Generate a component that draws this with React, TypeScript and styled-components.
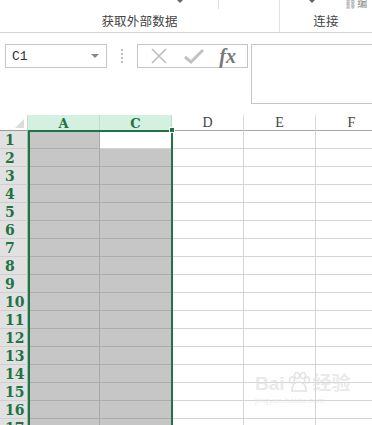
import React from "react";
import styled, { createGlobalStyle } from "styled-components";

const Global = createGlobalStyle`
  html, body { margin: 0; padding: 0; background: #ffffff; }
  body { width: 372px; height: 425px; overflow: hidden; font-family: "Noto Sans CJK SC", "Liberation Sans", sans-serif; }
`;

const Page = styled.div`
  position: relative;
  width: 372px;
  height: 425px;
  overflow: hidden;
  background: #fff;
`;

const Ribbon = styled.div`
  height: 33px;
  border-bottom: 1px solid #d4d4d4;
  display: flex;
  position: relative;
  box-sizing: border-box;
`;

const Group = styled.div<{ $w: number; $sep?: boolean }>`
  width: ${(p) => p.$w}px;
  flex: none;
  display: flex;
  align-items: flex-end;
  justify-content: center;
  padding-bottom: 2px;
  box-sizing: border-box;
  border-right: ${(p) => (p.$sep ? "1px solid #e2e2e2" : "none")};
  position: relative;
  font-size: 12.5px;
  color: #444;
  letter-spacing: 0.2px;
`;

const TinyArrow = styled.span<{ $x: number }>`
  position: absolute;
  left: ${(p) => p.$x}px;
  top: 0;
  width: 0;
  height: 0;
  border-left: 3px solid transparent;
  border-right: 3px solid transparent;
  border-top: 3px solid #666;
`;

const TinyLine = styled.span<{ $x: number }>`
  position: absolute;
  left: ${(p) => p.$x}px;
  top: 0;
  width: 1px;
  height: 9px;
  background: #e0e0e0;
`;

const EditSnip = styled.span`
  position: absolute;
  left: 64px;
  top: -5px;
  font-size: 10px;
  color: #888;
`;

const FormulaArea = styled.div`
  height: 82px;
  display: flex;
  align-items: flex-start;
  padding: 11px 0 0 5px;
  box-sizing: border-box;
`;

const NameBox = styled.div`
  width: 102px;
  height: 24px;
  border: 1px solid #c6c6c6;
  box-sizing: border-box;
  display: flex;
  align-items: center;
  justify-content: space-between;
  padding: 0 7px 0 6px;
  font-family: "Liberation Mono", "DejaVu Sans Mono", monospace;
  font-size: 13px;
  color: #333;
`;

const DownTri = styled.span`
  width: 0;
  height: 0;
  border-left: 4px solid transparent;
  border-right: 4px solid transparent;
  border-top: 4px solid #888;
`;

const Dots = styled.div`
  width: 2px;
  height: 14px;
  margin: 5px 14px 0 14px;
  background: repeating-linear-gradient(to bottom, #bbb 0 2px, transparent 2px 4px);
`;

const FxBox = styled.div`
  width: 111px;
  height: 24px;
  border: 1px solid #c6c6c6;
  box-sizing: border-box;
  display: flex;
  align-items: center;
  justify-content: space-around;
  padding: 0 4px;
`;

const FxText = styled.span`
  font-family: "Liberation Serif", "DejaVu Serif", serif;
  font-style: italic;
  font-weight: bold;
  font-size: 20px;
  color: #777;
  line-height: 1;
`;

const FormulaInput = styled.div`
  margin-left: 3px;
  flex: 1;
  height: 60px;
  border: 1px solid #c6c6c6;
  border-right: none;
  box-sizing: border-box;
`;

const Sheet = styled.div`
  position: relative;
  display: grid;
  grid-template-columns: 28px 72px 72px 72px 72px 72px;
  grid-auto-rows: 18px;
  grid-template-rows: 16px;
`;

const Corner = styled.div`
  position: relative;
  background: #fff;
  border-right: 1px solid #d4d4d4;
  border-bottom: 1px solid #9a9a9a;
  box-sizing: border-box;
  &::after {
    content: "";
    position: absolute;
    right: 3px;
    bottom: 2px;
    width: 0;
    height: 0;
    border-left: 9px solid transparent;
    border-bottom: 9px solid #dcdcdc;
  }
`;

const ColHead = styled.div<{ $sel?: boolean }>`
  background: ${(p) => (p.$sel ? "#d3f0e0" : "#fff")};
  border-right: 1px solid ${(p) => (p.$sel ? "#c0dccb" : "#dadada")};
  border-bottom: 1px solid ${(p) => (p.$sel ? "#217346" : "#a8a8a8")};
  box-sizing: border-box;
  display: flex;
  align-items: center;
  justify-content: center;
  font-family: ${(p) => (p.$sel ? `"DejaVu Serif", serif` : `"Liberation Serif", serif`)};
  font-size: ${(p) => (p.$sel ? "13px" : "14px")};
  font-weight: ${(p) => (p.$sel ? "bold" : "normal")};
  color: ${(p) => (p.$sel ? "#217346" : "#444")};
  padding-top: 1px;
`;

const RowHead = styled.div`
  background: #e1e1e1;
  border-right: 1px solid #9fbfab;
  border-bottom: 1px solid #cfcfcf;
  box-sizing: border-box;
  display: flex;
  align-items: center;
  justify-content: flex-start;
  padding-left: 5px;
  font-family: "DejaVu Serif", "Liberation Serif", serif;
  font-size: 14px;
  font-weight: bold;
  color: #217346;
  letter-spacing: 0;
`;

const Cell = styled.div<{ $fill?: boolean }>`
  background: ${(p) => (p.$fill ? "#c6c6c6" : "#fff")};
  border-right: 1px solid ${(p) => (p.$fill ? "#a9a9a9" : "#d4d4d4")};
  border-bottom: 1px solid ${(p) => (p.$fill ? "#adadad" : "#d4d4d4")};
  box-sizing: border-box;
`;

const Selection = styled.div`
  position: absolute;
  left: 28px;
  top: 15px;
  width: 145px;
  height: 320px;
  border: 2px solid #217346;
  box-sizing: border-box;
  pointer-events: none;
`;

const Handle = styled.div`
  position: absolute;
  left: 169px;
  top: 12px;
  width: 6px;
  height: 6px;
  background: #217346;
  border: 1px solid #fff;
  box-sizing: border-box;
`;

const Watermark = styled.div`
  position: absolute;
  left: 255px;
  top: 372px;
  color: rgba(225, 225, 225, 0.7);
  font-family: "Liberation Sans", "Noto Sans CJK SC", sans-serif;
  pointer-events: none;
  line-height: 1;
`;

const WmTop = styled.div`
  display: flex;
  align-items: center;
  gap: 2px;
  font-size: 19px;
  font-weight: bold;
`;

const WmBottom = styled.div`
  font-size: 8px;
  margin-top: 3px;
  letter-spacing: 0.3px;
`;

const cols = ["A", "C", "D", "E", "F"];

export default function App() {
  const rows = Array.from({ length: 17 }, (_, i) => i + 1);
  return (
    <Page>
      <Global />
      <Ribbon>
        <Group $w={280} $sep>
          获取外部数据
          <TinyArrow $x={177} />
          <TinyLine $x={218} />
        </Group>
        <Group $w={92}>
          连接
          <TinyArrow $x={29} />
          <EditSnip>⛓编</EditSnip>
        </Group>
      </Ribbon>
      <FormulaArea>
        <NameBox>
          C1
          <DownTri />
        </NameBox>
        <Dots />
        <FxBox>
          <svg width="20" height="20" viewBox="0 0 20 20">
            <path d="M3 3 L17 17 M17 3 L3 17" stroke="#bdbdbd" strokeWidth="1.6" fill="none" />
          </svg>
          <svg width="22" height="20" viewBox="0 0 22 20">
            <path d="M2 11 L8 16 L20 4" stroke="#c2c2c2" strokeWidth="3" fill="none" />
          </svg>
          <FxText>fx</FxText>
        </FxBox>
        <FormulaInput />
      </FormulaArea>
      <Sheet>
        <Corner />
        {cols.map((c, i) => (
          <ColHead key={c} $sel={i < 2}>
            {c}
          </ColHead>
        ))}
        {rows.map((r) => (
          <React.Fragment key={r}>
            <RowHead>{r}</RowHead>
            <Cell $fill />
            <Cell $fill={r !== 1} />
            <Cell />
            <Cell />
            <Cell />
          </React.Fragment>
        ))}
        <Selection />
        <Handle />
      </Sheet>
      <Watermark>
        <WmTop>
          Bai
          <svg width="24" height="22" viewBox="0 0 24 22">
            <g fill="none" stroke="rgba(220,220,220,0.8)" strokeWidth="1.5">
              <ellipse cx="5" cy="8" rx="2.5" ry="3" />
              <ellipse cx="10" cy="3.5" rx="2.5" ry="3" />
              <ellipse cx="16" cy="3.5" rx="2.5" ry="3" />
              <ellipse cx="20" cy="8" rx="2.5" ry="3" />
              <path d="M5 19 C5 12 9 10 12 10 C15 10 19 12 19 19 Z" />
            </g>
          </svg>
          经验
        </WmTop>
        <WmBottom>jingyan.baidu.com</WmBottom>
      </Watermark>
    </Page>
  );
}
